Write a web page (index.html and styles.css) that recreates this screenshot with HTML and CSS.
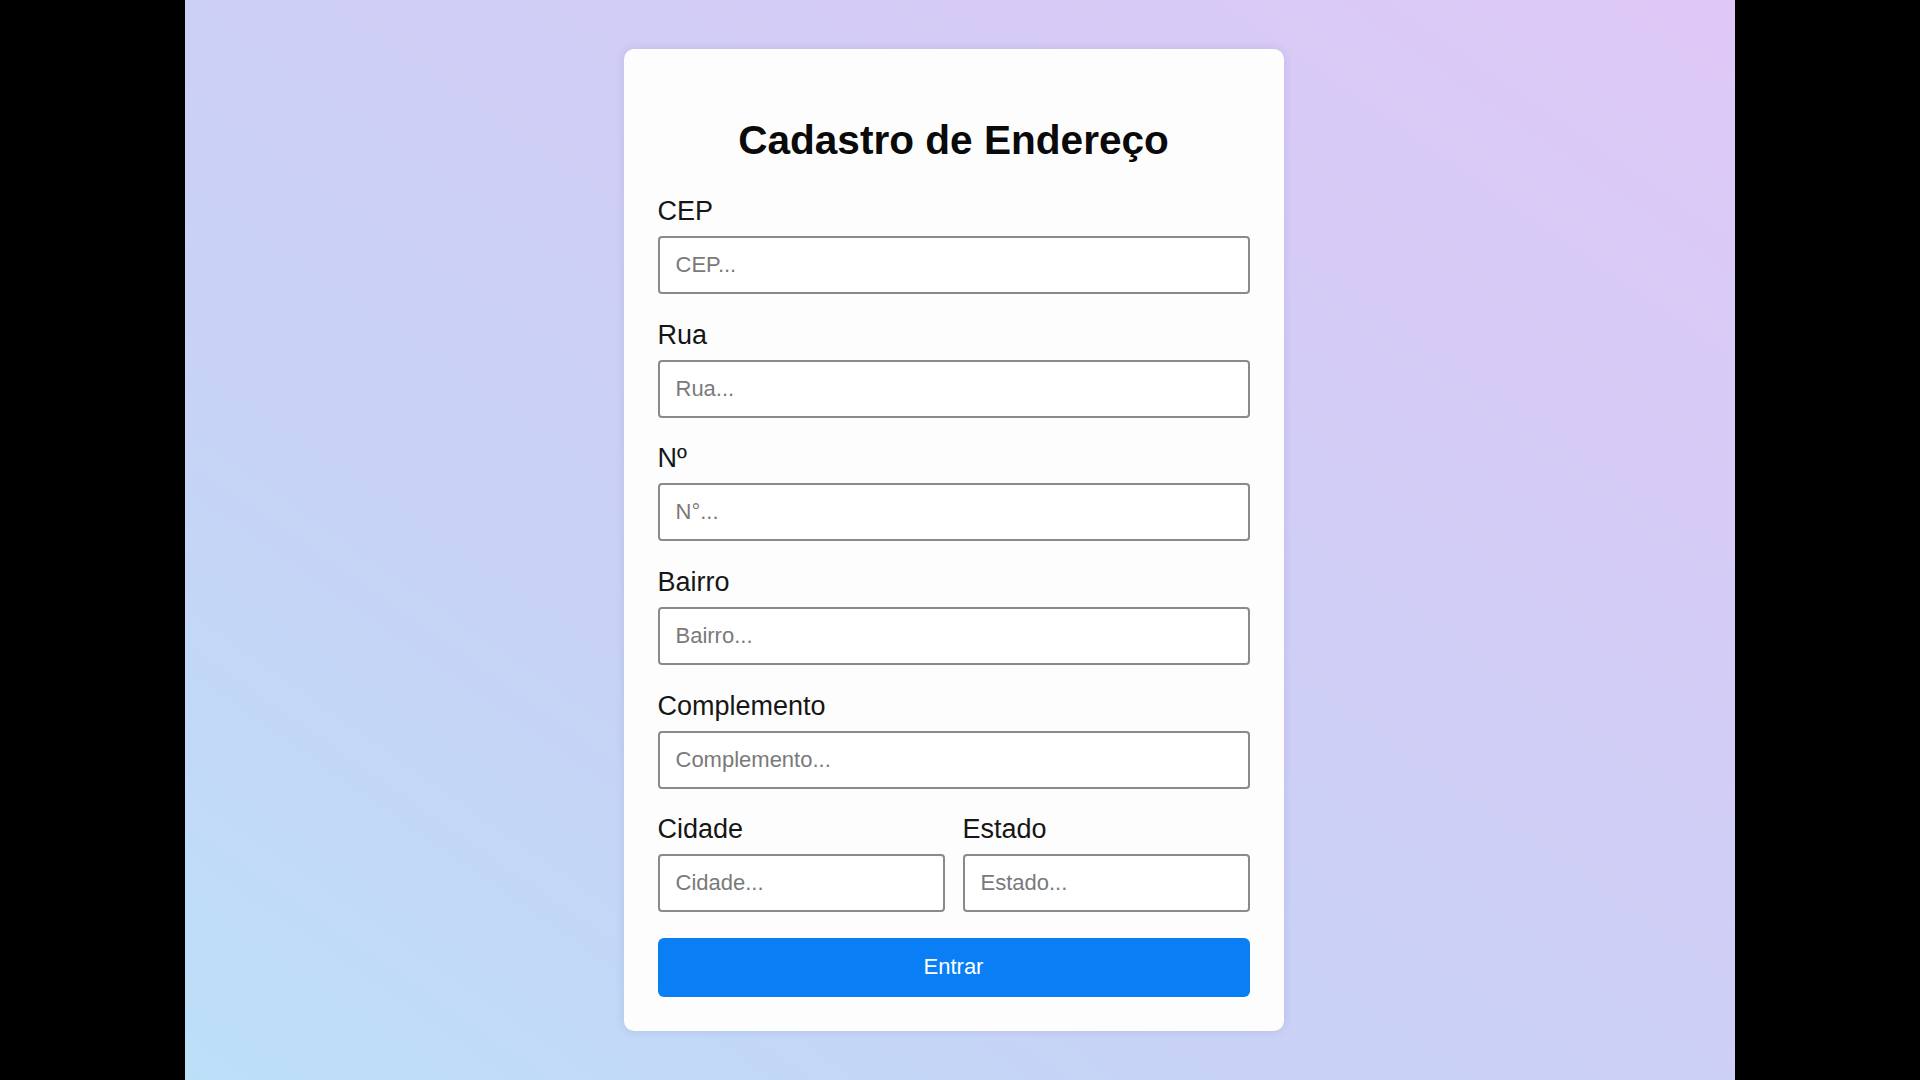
FILE: index.html
```html
<!DOCTYPE html>
<html lang="pt-BR">
<head>
<meta charset="UTF-8">
<title>Cadastro de Endereço</title>
<link rel="stylesheet" href="styles.css">
</head>
<body>
<div class="stage">
  <form class="card">
    <h1 class="title">Cadastro de Endereço</h1>
    <div class="field">
      <label class="label" for="cep">CEP</label>
      <input class="input" id="cep" type="text" placeholder="CEP...">
    </div>
    <div class="field">
      <label class="label" for="rua">Rua</label>
      <input class="input" id="rua" type="text" placeholder="Rua...">
    </div>
    <div class="field">
      <label class="label" for="num">Nº</label>
      <input class="input" id="num" type="text" placeholder="N°...">
    </div>
    <div class="field">
      <label class="label" for="bairro">Bairro</label>
      <input class="input" id="bairro" type="text" placeholder="Bairro...">
    </div>
    <div class="field">
      <label class="label" for="comp">Complemento</label>
      <input class="input" id="comp" type="text" placeholder="Complemento...">
    </div>
    <div class="row">
      <div class="field">
        <label class="label" for="cidade">Cidade</label>
        <input class="input" id="cidade" type="text" placeholder="Cidade...">
      </div>
      <div class="field">
        <label class="label" for="estado">Estado</label>
        <input class="input" id="estado" type="text" placeholder="Estado...">
      </div>
    </div>
    <button class="button" type="button">Entrar</button>
  </form>
</div>
</body>
</html>
```
FILE: styles.css
```css
html, body {
  margin: 0;
  padding: 0;
  height: 100%;
}

body {
  background: #000;
  font-family: "Liberation Sans", Arial, sans-serif;
}

.stage {
  width: 1550px;
  height: 1080px;
  margin: 0 auto;
  box-sizing: border-box;
  padding-right: 13px;
  display: flex;
  align-items: center;
  justify-content: center;
  background: linear-gradient(to top right, #bcdff8 0%, #c8d2f6 35%, #d2cdf6 65%, #dfc8f7 100%);
}

.card {
  width: 660px;
  box-sizing: border-box;
  padding: 34px;
  background: #fdfdfd;
  border-radius: 10px;
  box-shadow: 0 0 10px rgba(60, 50, 120, 0.12);
  display: flex;
  flex-direction: column;
}

.title {
  margin: 34px 0 33px;
  font-size: 40.6px;
  font-weight: bold;
  line-height: 46px;
  text-align: center;
  color: #0a0a0a;
}

.field {
  display: flex;
  flex-direction: column;
  gap: 10px;
  margin-bottom: 25.6px;
  min-width: 0;
}

.row {
  display: grid;
  grid-template-columns: 1fr 1fr;
  column-gap: 18px;
}

.label {
  font-size: 27px;
  line-height: 30px;
  color: #161616;
}

.input {
  height: 58px;
  box-sizing: border-box;
  width: 100%;
  padding: 0 16px;
  border: 2px solid #8a8a8a;
  border-radius: 4px;
  background: #fff;
  font-family: "Liberation Sans", Arial, sans-serif;
  font-size: 22px;
  color: #222;
  outline: none;
}

.input::placeholder {
  color: #7a7a7a;
}

.button {
  height: 59px;
  border: none;
  border-radius: 6px;
  background: #0a7ff5;
  color: #fff;
  font-family: "Liberation Sans", Arial, sans-serif;
  font-size: 22px;
  cursor: pointer;
}
```
